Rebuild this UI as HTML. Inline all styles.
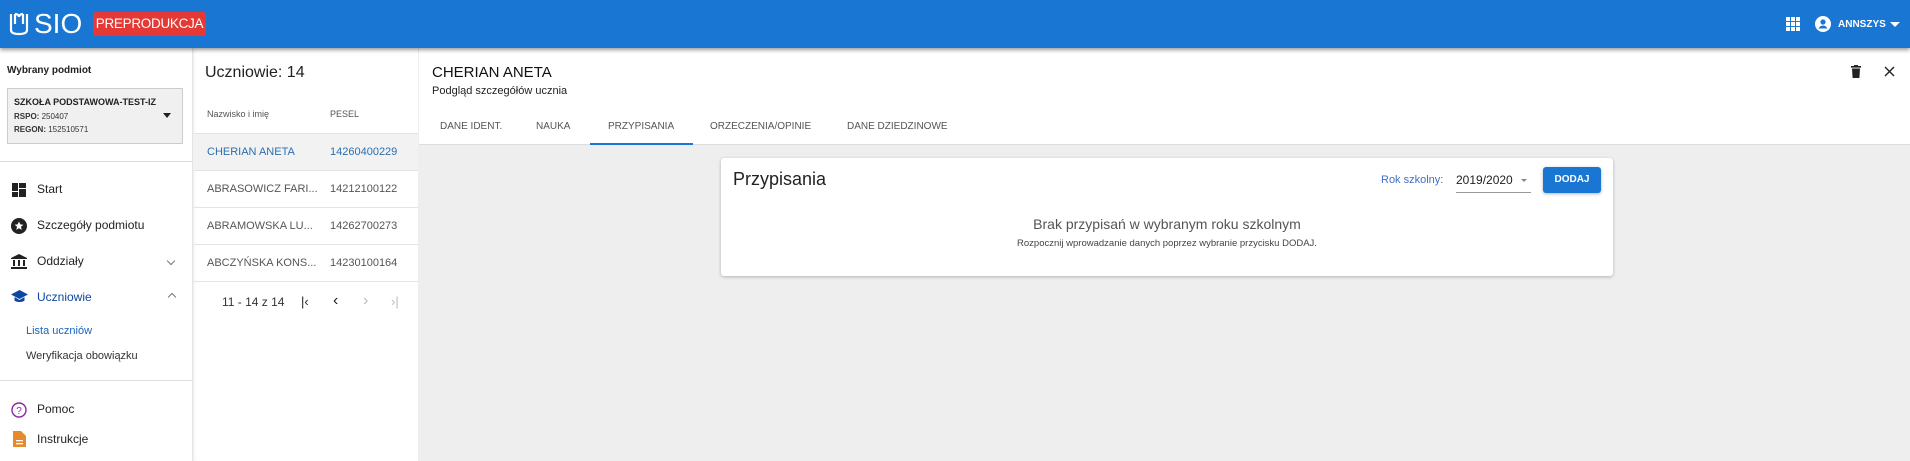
<!DOCTYPE html>
<html><head><meta charset="utf-8"><style>
*{box-sizing:border-box;margin:0;padding:0}
body{width:1910px;height:461px;overflow:hidden;font-family:"Liberation Sans",sans-serif;background:#eee;position:relative;color:#222}
.a{position:absolute;white-space:nowrap}
</style></head><body>
<div class="a" style="left:0;top:0;width:1910px;height:48px;background:#1976d2;box-shadow:0 2px 4px rgba(0,0,0,.4);z-index:5"></div>
<svg class="a" style="left:9px;top:12px;z-index:6" width="20" height="24" viewBox="0 0 20 24"><path d="M2 2v16c0 3 3 4 8 4s8-1 8-4V2M6 2v10M14 2v10M6 2c2 0 4 1 4 3 0-2 2-3 4-3" fill="none" stroke="#fff" stroke-width="2.2"/></svg>
<div class="a" style="left:34px;top:9px;font-size:28px;line-height:30px;color:#fff;z-index:6">SIO</div>
<div class="a" style="left:93px;top:12px;width:113px;height:24px;background:#e53935;border-radius:3px;color:#fff;font-size:13.5px;line-height:24px;text-align:center;z-index:6;letter-spacing:-.3px">PREPRODUKCJA</div>
<svg class="a" style="left:1786px;top:17px;z-index:6" width="14" height="14" viewBox="0 0 14 14" fill="#fff"><rect x="0" y="0" width="4" height="4"/><rect x="5" y="0" width="4" height="4"/><rect x="10" y="0" width="4" height="4"/><rect x="0" y="5" width="4" height="4"/><rect x="5" y="5" width="4" height="4"/><rect x="10" y="5" width="4" height="4"/><rect x="0" y="10" width="4" height="4"/><rect x="5" y="10" width="4" height="4"/><rect x="10" y="10" width="4" height="4"/></svg>
<svg class="a" style="left:1815px;top:16px;z-index:6" width="16" height="16" viewBox="0 0 16 16"><circle cx="8" cy="8" r="8" fill="#fff"/><circle cx="8" cy="6" r="2.6" fill="#1976d2"/><path d="M3.5 12.5c1-2 2.5-3 4.5-3s3.5 1 4.5 3" fill="#1976d2"/></svg>
<div class="a" style="left:1838px;top:19px;font-size:10px;font-weight:bold;color:#fff;z-index:6">ANNSZYS</div>
<div class="a" style="left:1890px;top:22px;border:5px solid transparent;border-top-color:#fff;z-index:6"></div>

<div class="a" style="left:0;top:48px;width:192px;height:413px;background:#fff"></div>
<div class="a" style="left:7px;top:65px;font-size:10px;font-weight:bold">Wybrany podmiot</div>
<div class="a" style="left:7px;top:88px;width:176px;height:56px;background:#f0f0f0;border:1px solid #ccc"></div>
<div class="a" style="left:14px;top:97px;font-size:9px;font-weight:bold">SZKOŁA PODSTAWOWA-TEST-IZ</div>
<div class="a" style="left:14px;top:112px;font-size:8px;font-weight:bold;color:#333">RSPO: <span style="font-weight:normal">250407</span></div>
<div class="a" style="left:14px;top:125px;font-size:8px;font-weight:bold;color:#333">REGON: <span style="font-weight:normal">152510571</span></div>
<div class="a" style="left:163px;top:113px;border:4.5px solid transparent;border-top:5px solid #222"></div>
<div class="a" style="left:0;top:161px;width:192px;height:1px;background:#ddd"></div>
<svg class="a" style="left:12px;top:183px" width="14" height="14" viewBox="0 0 14 14" fill="#222"><rect x="0" y="0" width="6" height="8"/><rect x="0" y="9" width="6" height="5"/><rect x="7" y="0" width="7" height="5"/><rect x="7" y="6" width="7" height="8"/></svg>
<div class="a" style="left:37px;top:182px;font-size:12px">Start</div>
<svg class="a" style="left:11px;top:218px" width="16" height="16" viewBox="0 0 16 16"><circle cx="8" cy="8" r="8" fill="#222"/><path d="M8 3.5l1.3 2.9 3.1.3-2.4 2.1.7 3.1L8 10.3l-2.7 1.6.7-3.1-2.4-2.1 3.1-.3z" fill="#fff"/></svg>
<div class="a" style="left:37px;top:218px;font-size:12px">Szczegóły podmiotu</div>
<svg class="a" style="left:11px;top:254px" width="16" height="15" viewBox="0 0 16 15" fill="#222"><path d="M8 0l8 4v1H0V4z"/><rect x="2" y="6" width="2" height="6"/><rect x="7" y="6" width="2" height="6"/><rect x="12" y="6" width="2" height="6"/><rect x="0" y="13" width="16" height="2"/></svg>
<div class="a" style="left:37px;top:254px;font-size:12px">Oddziały</div>
<div class="a" style="left:168px;top:258px;width:6px;height:6px;border-right:1px solid #777;border-bottom:1px solid #777;transform:rotate(45deg)"></div>
<svg class="a" style="left:11px;top:290px" width="17" height="14" viewBox="0 0 17 14" fill="#0d47a1"><path d="M8.5 0L17 4.5 8.5 9 0 4.5z"/><path d="M3.5 7v3.5c1.5 2 8.5 2 10 0V7L8.5 10z"/></svg>
<div class="a" style="left:37px;top:290px;font-size:12px;color:#0d47a1">Uczniowie</div>
<div class="a" style="left:169px;top:294px;width:6px;height:6px;border-left:1px solid #777;border-top:1px solid #777;transform:rotate(45deg)"></div>
<div class="a" style="left:26px;top:325px;font-size:11px;color:#1565c0">Lista uczniów</div>
<div class="a" style="left:26px;top:350px;font-size:11px;color:#333">Weryfikacja obowiązku</div>
<div class="a" style="left:0;top:380px;width:192px;height:1px;background:#ddd"></div>
<svg class="a" style="left:11px;top:402px" width="16" height="16" viewBox="0 0 16 16"><circle cx="8" cy="8" r="7" fill="none" stroke="#8e24aa" stroke-width="1.4"/><text x="8" y="12" font-size="10" text-anchor="middle" fill="#8e24aa" font-family="Liberation Sans">?</text></svg>
<div class="a" style="left:37px;top:402px;font-size:12px">Pomoc</div>
<svg class="a" style="left:13px;top:431px" width="13" height="16" viewBox="0 0 13 16"><path d="M0 0h8l5 5v11H0z" fill="#e68a2e"/><rect x="3" y="9" width="7" height="1.3" fill="#fff"/><rect x="3" y="12" width="7" height="1.3" fill="#fff"/></svg>
<div class="a" style="left:37px;top:432px;font-size:12px">Instrukcje</div>

<div class="a" style="left:192px;top:48px;width:226px;height:413px;background:#fff;border-left:1px solid #e4e4e4;box-shadow:inset 3px 0 3px -2px rgba(0,0,0,.08)"></div>
<div class="a" style="left:205px;top:64px;font-size:16px">Uczniowie: 14</div>
<div class="a" style="left:207px;top:109px;font-size:9px;color:#555">Nazwisko i imię</div>
<div class="a" style="left:330px;top:109px;font-size:9px;color:#555">PESEL</div>
<div class="a" style="left:193px;top:133px;width:225px;height:37px;background:#f2f2f2;border-top:1px solid #e4e4e4"></div>
<div class="a" style="left:207px;top:146px;font-size:11px;color:#2a6fb0">CHERIAN ANETA</div><div class="a" style="left:330px;top:146px;font-size:11px;color:#2a6fb0">14260400229</div>
<div class="a" style="left:193px;top:170px;width:225px;height:1px;background:#e4e4e4"></div>
<div class="a" style="left:207px;top:183px;font-size:11px;color:#555">ABRASOWICZ FARI...</div><div class="a" style="left:330px;top:183px;font-size:11px;color:#555">14212100122</div>
<div class="a" style="left:193px;top:207px;width:225px;height:1px;background:#e4e4e4"></div>
<div class="a" style="left:207px;top:220px;font-size:11px;color:#555">ABRAMOWSKA LU...</div><div class="a" style="left:330px;top:220px;font-size:11px;color:#555">14262700273</div>
<div class="a" style="left:193px;top:244px;width:225px;height:1px;background:#e4e4e4"></div>
<div class="a" style="left:207px;top:257px;font-size:11px;color:#555">ABCZYŃSKA KONS...</div><div class="a" style="left:330px;top:257px;font-size:11px;color:#555">14230100164</div>
<div class="a" style="left:193px;top:281px;width:225px;height:1px;background:#e4e4e4"></div>
<div class="a" style="left:222px;top:295px;font-size:12px;color:#333">11 - 14 z 14</div>
<div class="a" style="left:301px;top:294px;font-size:13px;color:#222">|‹</div>
<div class="a" style="left:333px;top:292px;font-size:16px;color:#222">‹</div>
<div class="a" style="left:363px;top:292px;font-size:16px;color:#bbb">›</div>
<div class="a" style="left:391px;top:294px;font-size:13px;color:#bbb">›|</div>

<div class="a" style="left:419px;top:48px;width:1491px;height:97px;background:#fff;border-bottom:1px solid #ddd"></div>
<div class="a" style="left:432px;top:64px;font-size:15px;color:#111">CHERIAN ANETA</div>
<div class="a" style="left:432px;top:85px;font-size:11px;color:#222">Podgląd szczegółów ucznia</div>
<div class="a" style="left:440px;top:121px;font-size:10px;color:#555">DANE IDENT.</div>
<div class="a" style="left:536px;top:121px;font-size:10px;color:#555">NAUKA</div>
<div class="a" style="left:608px;top:121px;font-size:10px;color:#555">PRZYPISANIA</div>
<div class="a" style="left:710px;top:121px;font-size:10px;color:#555">ORZECZENIA/OPINIE</div>
<div class="a" style="left:847px;top:121px;font-size:10px;color:#555">DANE DZIEDZINOWE</div>
<div class="a" style="left:590px;top:143px;width:103px;height:2px;background:#1976d2"></div>
<svg class="a" style="left:1851px;top:65px" width="10" height="13" viewBox="0 0 10 13" fill="#222"><rect x="0" y="1" width="10" height="1.6"/><rect x="3" y="0" width="4" height="1.5"/><path d="M1 3.5h8l-.6 9.5H1.6z"/></svg>
<svg class="a" style="left:1884px;top:66px" width="11" height="11" viewBox="0 0 11 11"><path d="M1 1l9 9M10 1l-9 9" stroke="#222" stroke-width="1.4"/></svg>

<div class="a" style="left:721px;top:158px;width:892px;height:118px;background:#fff;border-radius:3px;box-shadow:0 1px 3px rgba(0,0,0,.25)"></div>
<div class="a" style="left:733px;top:169px;font-size:18px;color:#222">Przypisania</div>
<div class="a" style="left:1381px;top:174px;font-size:11px;color:#3f6fc9">Rok szkolny:</div>
<div class="a" style="left:1456px;top:173px;font-size:12px;color:#222">2019/2020</div>
<div class="a" style="left:1521px;top:179px;border:3px solid transparent;border-top-color:#888"></div>
<div class="a" style="left:1456px;top:192px;width:75px;height:1px;background:#999"></div>
<div class="a" style="left:1543px;top:167px;width:58px;height:26px;background:#1976d2;border-radius:3px;box-shadow:0 1px 3px rgba(0,0,0,.3);color:#fff;font-size:10px;font-weight:bold;line-height:26px;text-align:center">DODAJ</div>
<div class="a" style="left:721px;width:892px;top:216px;text-align:center;font-size:14px;color:#555">Brak przypisań w wybranym roku szkolnym</div>
<div class="a" style="left:721px;width:892px;top:238px;text-align:center;font-size:9.5px;color:#444">Rozpocznij wprowadzanie danych poprzez wybranie przycisku DODAJ.</div>
</body></html>
